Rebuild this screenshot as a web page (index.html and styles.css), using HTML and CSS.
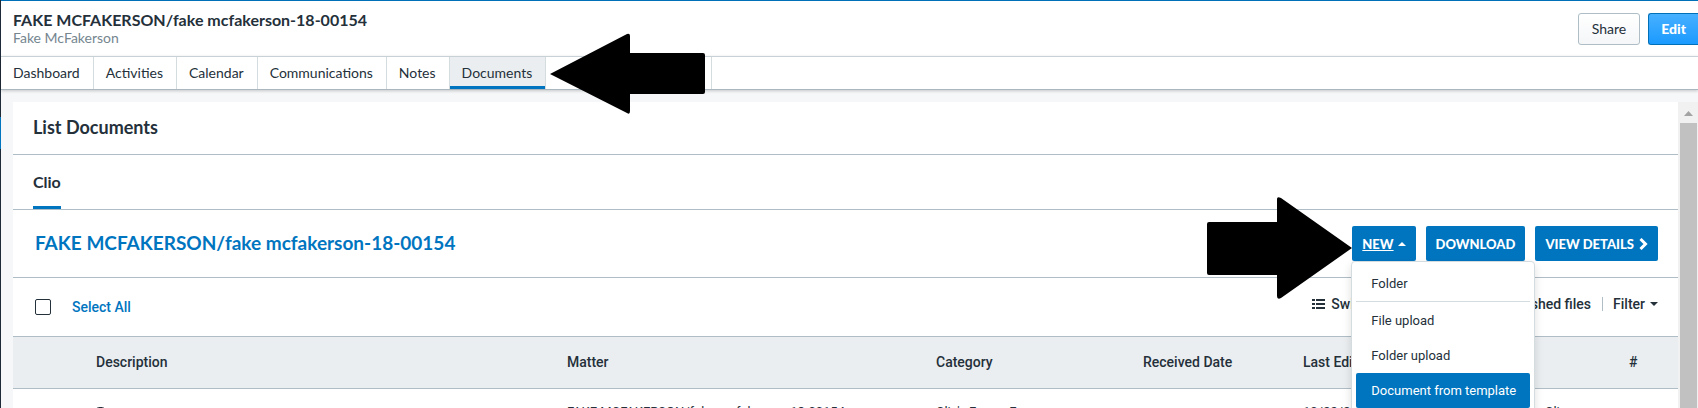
FILE: index.html
```html
<!DOCTYPE html>
<html lang="en">
<head>
<meta charset="utf-8">
<title>List Documents</title>
<link rel="stylesheet" href="styles.css">
</head>
<body>
<div class="app">
  <div class="rail"><span class="rail-active"></span></div>
  <div class="main">
    <header class="matter-header">
      <div>
        <h1 class="matter-title">FAKE MCFAKERSON/fake mcfakerson-18-00154</h1>
        <p class="matter-client">Fake McFakerson</p>
      </div>
      <div class="header-actions">
        <button class="btn" type="button">Share</button>
        <button class="btn btn-edit" type="button">Edit</button>
      </div>
    </header>
    <nav class="tabs">
      <a class="tab" href="#">Dashboard</a>
      <a class="tab" href="#">Activities</a>
      <a class="tab" href="#">Calendar</a>
      <a class="tab" href="#">Communications</a>
      <a class="tab" href="#">Notes</a>
      <a class="tab tab-active" href="#">Documents</a>
      <span class="tab tab-rest"></span>
      <svg class="arrow arrow-left" width="156" height="82" viewBox="0 0 156 82"><path d="M0 41 77 1Q80 0 80 3V20H153Q155 20 155 22V59Q155 61 153 61H80V78Q80 82 77 80Z"/></svg>
    </nav>
    <div class="workspace">
      <section class="panel">
        <h2 class="panel-title">List Documents</h2>
        <div class="source-tabs"><a class="source-tab" href="#">Clio</a></div>
        <div class="folder-bar">
          <h3 class="folder-title">FAKE MCFAKERSON/fake mcfakerson-18-00154</h3>
          <div class="folder-actions">
            <svg class="arrow arrow-right" width="145" height="102" viewBox="0 0 145 102"><path d="M145 51 74 1Q70 -1 70 2V25H2Q0 25 0 27V76Q0 78 2 78H70V99Q70 103 74 101Z"/></svg>
            <div class="new-wrap">
              <button class="action" type="button"><u>NEW</u><svg width="8" height="4" viewBox="0 0 8 4"><path d="M0 4 4 0 8 4Z" fill="#fff"/></svg></button>
              <div class="menu">
                <a class="menu-item" href="#">Folder</a>
                <hr class="menu-line">
                <a class="menu-item" href="#">File upload</a>
                <a class="menu-item" href="#">Folder upload</a>
                <a class="menu-item menu-active" href="#">Document from template</a>
              </div>
            </div>
            <button class="action" type="button">DOWNLOAD</button>
            <button class="action action-details" type="button">VIEW DETAILS<svg width="9" height="12" viewBox="0 0 9 12"><path d="M1.500 1 6.500 6 1.500 11" fill="none" stroke="#fff" stroke-width="3"/></svg></button>
          </div>
        </div>
        <div class="list-bar">
          <label class="select-all"><input class="check" type="checkbox">Select All</label>
          <div class="list-tools">
            <a class="tool tool-view" href="#"><svg width="13" height="10" viewBox="0 0 13 10"><path d="M0 0h3v2H0zM4 0h9v2H4zM0 4h3v2H0zM4 4h9v2H4zM0 8h3v2H0zM4 8h9v2H4z" fill="#24303a"/></svg>Switch view</a>
            <a class="tool" href="#">Show unpublished files</a>
            <button class="filter" type="button">Filter<svg width="8" height="4" viewBox="0 0 8 4"><path d="M0 0H8L4 4Z" fill="#24303a"/></svg></button>
          </div>
        </div>
        <table class="docs">
          <colgroup><col class="c-desc"><col class="c-matter"><col class="c-cat"><col class="c-recv"><col class="c-edit"><col class="c-owner"><col class="c-num"></colgroup>
          <thead><tr><th class="first">Description</th><th>Matter</th><th>Category</th><th>Received Date</th><th>Last Edit</th><th></th><th>#</th></tr></thead>
          <tbody><tr>
            <td class="first"><svg class="file" width="10" height="12" viewBox="0 0 10 12"><rect x="1" y="0.500" width="7" height="10" rx="1.500" fill="none" stroke="#24303a"/></svg></td>
            <td>FAKE MCFAKERSON/fake mcfakerson-18-00154</td><td>Clio's Forms Forms</td><td></td><td>10/22/2019</td><td>Clio</td><td></td></tr></tbody>
        </table>
      </section>
      <div class="scroll"><svg width="9" height="5" viewBox="0 0 9 5"><path d="M0 5 4.500 0 9 5Z" fill="#a3a3a3"/></svg><span class="thumb"></span></div>
    </div>
  </div>
</div>
</body>
</html>
```
FILE: styles.css
```css
* { box-sizing: border-box; }
body {
  margin: 0;
  overflow: hidden;
  color: #24303a;
  background: #f6f7f9;
  font: 14px/20px Lato, sans-serif;
}
h1, h2, h3, p { margin: 0; }
a { color: inherit; text-decoration: none; }
button { font: inherit; color: inherit; margin: 0; cursor: pointer; }
.app { display: flex; height: 100vh; overflow: hidden; }
.rail { width: 1px; background: #1f2a38; padding-top: 117px; }
.rail-active { display: block; height: 32px; background: #0075bf; }
.main { flex: 1; min-width: 0; display: flex; flex-direction: column; border-top: 1px solid #0070b8; }
.matter-header {
  display: flex;
  flex: none;
  justify-content: space-between;
  align-items: flex-start;
  padding: 10px 0 9px 12px;
  background: #fff;
}
.matter-title { font-size: 16px; line-height: 18px; }
.matter-client { line-height: 18px; color: #75868f; }
.header-actions { display: flex; gap: 8px; padding-top: 2px; }
.btn {
  height: 32px;
  padding: 0 13px;
  border: 1px solid #aebdc6;
  border-radius: 3px;
  background: linear-gradient(#fff, #f4f6f8);
}
.btn-edit {
  padding: 0 12px;
  border-color: #0070b8;
  border-right: 0;
  border-radius: 3px 0 0 3px;
  background: linear-gradient(#47b0ff, #1a9aff);
  color: #fff;
  font-weight: 900;
}
.tabs {
  position: relative;
  z-index: 2;
  display: flex;
  flex: none;
  height: 34px;
  border-top: 1px solid #c8d1d6;
  border-bottom: 1px solid #abb7bf;
  background: #fff;
  box-shadow: 0 1px 3px #0003;
}
.tab { padding: 0 13px 0 12px; line-height: 32px; border-right: 1px solid #d5dce0; }
.tab-active { background: #ebeef1; box-shadow: inset 0 -3px #0075bf; }
.tab-rest { width: 166px; }
.arrow { position: absolute; }
.arrow-left { left: 549px; top: -24px; }
.arrow-right { right: 100%; top: -29px; }
.workspace { display: flex; flex: 1; min-height: 0; padding: 12px 0 0 12px; }
.panel { flex: 1; min-width: 0; overflow: hidden; background: #fff; }
.panel-title { padding: 13px 20px; height: 53px; font-size: 18px; line-height: 24px; border-bottom: 1px solid #aebdc6; }
.source-tabs { display: flex; height: 55px; padding-left: 20px; border-bottom: 1px solid #aebdc6; }
.source-tab { font-size: 16px; font-weight: 700; line-height: 54px; border-bottom: 3px solid #0075bf; }
.folder-bar {
  display: flex;
  justify-content: space-between;
  align-items: flex-start;
  height: 68px;
  padding: 16px 20px 0 22px;
  border-bottom: 1px solid #aebdc6;
}
.folder-title { color: #0075bf; font-size: 19px; line-height: 34px; }
.folder-actions { position: relative; display: flex; gap: 10px; }
.new-wrap { position: relative; }
.action {
  display: flex;
  align-items: center;
  gap: 4px;
  height: 35px;
  padding: 0 10px;
  border: 0;
  border-radius: 2px;
  background: #0075bf;
  color: #fff;
  font-size: 13px;
  font-weight: 900;
}
.action-details { gap: 5px; }
.menu {
  position: absolute;
  z-index: 3;
  top: 35px;
  left: -1px;
  width: 184px;
  padding: 4px;
  border: 1px solid #d5dce0;
  border-radius: 4px;
  background: #fff;
  box-shadow: 0 4px 10px #0002;
  font: 13px/35px Roboto, sans-serif;
}
.menu-item { display: block; padding: 0 15px; white-space: nowrap; border-radius: 2px; }
.menu-line { margin: 0 0 1px; border: 0; border-top: 1px solid #d5dce0; }
.menu-active { background: #0075bf; color: #fff; }
.list-bar {
  display: flex;
  justify-content: space-between;
  height: 59px;
  padding: 0 20px 0 22px;
  border-bottom: 1px solid #aebdc6;
  font: 500 14px/58px Roboto, sans-serif;
}
.select-all { display: flex; align-items: center; gap: 21px; color: #0075bf; }
.check { appearance: none; width: 16px; height: 16px; margin: 0; border: 1px solid #24303a; border-radius: 2px; }
.list-tools { display: flex; align-items: center; height: 52px; }
.tool { display: flex; align-items: center; gap: 6px; padding-right: 11px; line-height: 14px; border-right: 1px solid #aebdc6; }
.tool-view { margin-right: 29px; }
.filter { display: flex; align-items: center; gap: 5px; padding: 0 0 0 10px; border: 0; background: none; line-height: 20px; }
.docs { width: 100%; table-layout: fixed; border-collapse: collapse; font: 14px/20px Roboto, sans-serif; }
th { height: 51px; padding: 0; text-align: left; font-weight: 500; background: #ebeef1; border-bottom: 1px solid #aebdc6; }
td { padding: 13px 0 0; white-space: nowrap; vertical-align: top; font-size: 13px; }
.docs .first { padding-left: 83px; }
.file { display: block; margin-top: 5px; }
.c-desc { width: 554px; }
.c-matter { width: 369px; }
.c-cat { width: 207px; }
.c-recv { width: 160px; }
.c-edit { width: 242px; }
.c-num { width: 49px; }
.scroll { width: 20px; display: flex; flex-direction: column; align-items: center; padding: 9px 0 0 1px; gap: 7px; background: #f1f1f1; }
.thumb { flex: 1; width: 17px; background: #c1c1c1; }
.scroll svg { flex: none; }
```
